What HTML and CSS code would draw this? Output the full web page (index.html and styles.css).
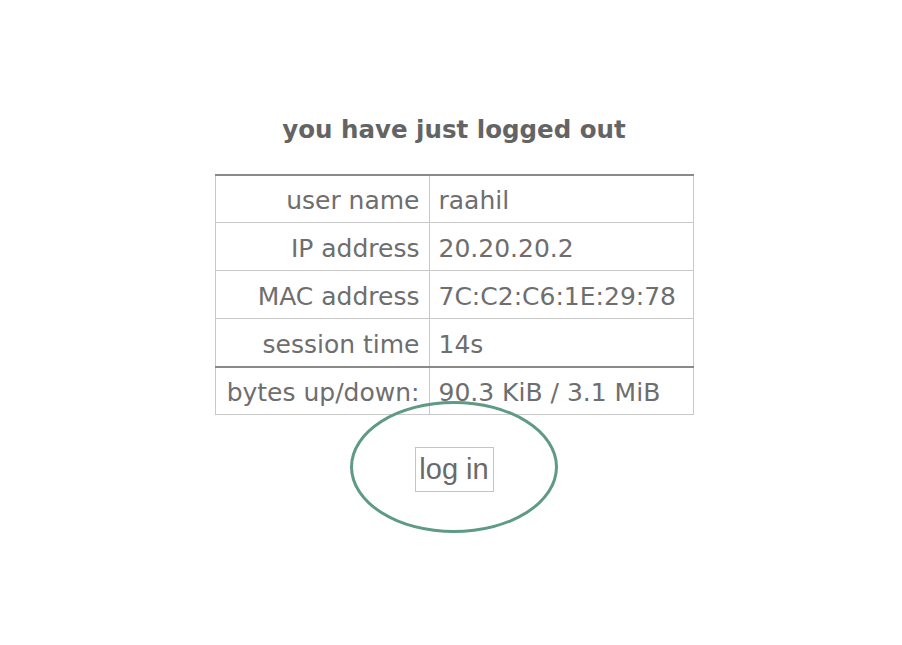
FILE: index.html
```html
<!DOCTYPE html>
<html>
<head>
<meta charset="utf-8">
<title>logged out</title>
<link rel="stylesheet" href="styles.css">
</head>
<body>
<div class="page">
  <h1 class="title">you have just logged out</h1>
  <table class="info">
    <tr class="first"><td class="label">user name</td><td class="value">raahil</td></tr>
    <tr><td class="label">IP address</td><td class="value">20.20.20.2</td></tr>
    <tr><td class="label">MAC address</td><td class="value">7C:C2:C6:1E:29:78</td></tr>
    <tr><td class="label">session time</td><td class="value">14s</td></tr>
    <tr class="bytes"><td class="label">bytes up/down:</td><td class="value">90.3 KiB / 3.1 MiB</td></tr>
  </table>
  <div class="action">
    <button class="login" type="button">log in</button>
    <div class="circle"></div>
  </div>
</div>
</body>
</html>
```
FILE: styles.css
```css
html, body {
  margin: 0;
  padding: 0;
  background: #ffffff;
}
body {
  min-height: 645px;
}
.page {
  display: flex;
  flex-direction: column;
  align-items: center;
  padding-top: 112px;
  padding-left: 6px;
  font-family: "DejaVu Sans", Verdana, sans-serif;
  color: #6a6a6a;
}
.title {
  margin: 0 0 27px 0;
  font-size: 24.5px;
  font-weight: bold;
  line-height: 35px;
  color: #646464;
}
.info {
  border-collapse: collapse;
  table-layout: fixed;
  width: 479px;
  font-size: 25px;
}
.info td {
  border: 1px solid #c9c9c9;
  height: 43px;
  padding: 4px 9px 0 9px;
  line-height: 28px;
  color: #6e6e6e;
  white-space: nowrap;
}
.info tr.first td {
  height: 42px;
  border-top: 2px solid #8a8a8a;
}
.info tr.bytes td {
  height: 42px;
  border-top: 2px solid #8a8a8a;
}
.label {
  width: 195px;
  text-align: right;
}
.value {
  text-align: left;
}
.action {
  position: relative;
  margin-top: 32px;
  display: flex;
  justify-content: center;
}
.login {
  font-family: "Liberation Sans", Arial, sans-serif;
  font-size: 29px;
  color: #6a6a6a;
  background: #ffffff;
  border: 1px solid #c4c4c4;
  padding: 0;
  width: 79px;
  height: 45px;
  line-height: 43px;
}
.circle {
  position: absolute;
  left: 50%;
  top: -46px;
  width: 202px;
  height: 126px;
  margin-left: -104px;
  border: 3px solid #5f9a86;
  border-radius: 50%;
  pointer-events: none;
}
```
